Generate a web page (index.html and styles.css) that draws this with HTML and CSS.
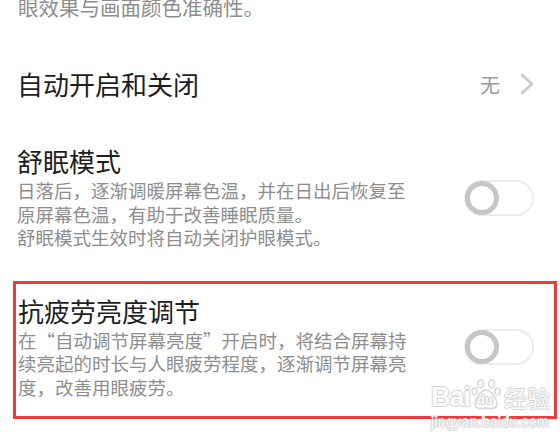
FILE: index.html
```html
<!DOCTYPE html>
<html lang="zh-CN">
<head>
<meta charset="utf-8">
<link rel="stylesheet" href="styles.css">
</head>
<body>
<div class="page">
  <p class="desc prev">眼效果与画面颜色准确性。</p>

  <div class="row nav-row">
    <span class="title">自动开启和关闭</span>
    <span class="value">无</span>
    <svg class="chev" width="16" height="22" viewBox="0 0 16 22"><path d="M2 2 L12 11 L2 20" fill="none" stroke="#c9c9c9" stroke-width="2.6" stroke-linecap="round" stroke-linejoin="round"/></svg>
  </div>

  <div class="row setting sleep">
    <div class="text">
      <div class="title">舒眠模式</div>
      <p class="desc">日落后，逐渐调暖屏幕色温，并在日出后恢复至<br>原屏幕色温，有助于改善睡眠质量。<br>舒眠模式生效时将自动关闭护眼模式。</p>
    </div>
    <svg class="toggle" width="70" height="36" viewBox="0 0 70 36"><rect x="1" y="1" width="68" height="34" rx="17" fill="#fff" stroke="#ececec" stroke-width="2"/><circle cx="18" cy="18" r="14.5" fill="#fff" stroke="#c6c6c6" stroke-width="5"/></svg>
  </div>

  <div class="highlight">
    <div class="row setting">
      <div class="text">
        <div class="title">抗疲劳亮度调节</div>
        <p class="desc">在“自动调节屏幕亮度”开启时，将结合屏幕持<br>续亮起的时长与人眼疲劳程度，逐渐调节屏幕亮<br>度，改善用眼疲劳。</p>
      </div>
      <svg class="toggle" width="70" height="36" viewBox="0 0 70 36"><rect x="1" y="1" width="68" height="34" rx="17" fill="#fff" stroke="#ececec" stroke-width="2"/><circle cx="18" cy="18" r="14.5" fill="#fff" stroke="#c6c6c6" stroke-width="5"/></svg>
    </div>
  </div>

  <div class="watermark">
    <div class="wm-top">
      <span class="wm-bai">Bai</span>
      <span class="wm-paw">
        <svg width="30" height="32" viewBox="0 0 30 32"><g fill="#fbfbfb" stroke="#d6d6d6" stroke-width="1.4"><ellipse cx="9.5" cy="5" rx="3" ry="4"/><ellipse cx="20.5" cy="5" rx="3" ry="4"/><ellipse cx="3.5" cy="12.5" rx="2.6" ry="3.4"/><ellipse cx="26.5" cy="12.5" rx="2.6" ry="3.4"/><path d="M15 11 C10 11 4 20 4 25 C4 30 10 30 15 29 C20 30 26 30 26 25 C26 20 20 11 15 11 Z"/></g></svg>
        <span class="wm-du">du</span>
      </span>
      <span class="wm-jy">经验</span>
    </div>
    <div class="wm-url">jingyan.baidu.com</div>
  </div>
</div>
</body>
</html>
```

FILE: styles.css
```css
html, body {
  margin: 0;
  padding: 0;
  background: #ffffff;
}

body {
  font-family: "Noto Sans CJK SC", "Noto Sans", sans-serif;
  width: 560px;
  height: 441px;
  overflow: hidden;
}

.page {
  position: relative;
  width: 560px;
  height: 441px;
}

.desc {
  margin: 0;
  font-size: 18.5px;
  line-height: 23.5px;
  color: #8e8e8e;
}

.prev {
  padding: 0 18px;
  margin-top: -5px;
  font-size: 20.5px;
  line-height: 24px;
}

.row {
  display: flex;
  align-items: center;
}

.title {
  font-size: 26px;
  line-height: 34px;
  color: #1e1e1e;
}

.nav-row {
  height: 54px;
  margin-top: 38px;
  padding: 0 24px 0 17px;
}

.nav-row .title {
  flex: 1;
}

.value {
  font-size: 20px;
  color: #9a9a9a;
  margin-right: 20px;
}

.chev {
  display: block;
}

.setting {
  padding: 0 26px 0 17px;
  justify-content: space-between;
}

.sleep {
  margin-top: 33px;
}

.setting .title {
  margin-bottom: 1px;
}

.toggle {
  display: block;
  flex: none;
  margin-top: 2px;
}

.highlight {
  margin: 31px 0 0 13px;
  width: 544px;
  box-sizing: border-box;
  border: 3px solid #f2393b;
  padding: 10px 0 17px;
}

.highlight .setting {
  padding: 0 20px 0 2px;
}

.watermark {
  position: absolute;
  left: 431px;
  top: 382px;
  color: #fbfbfb;
  font-family: "Liberation Sans", "Noto Sans CJK SC", sans-serif;
  text-shadow: 1px 0 #d4d4d4, -1px 0 #d4d4d4, 0 1px #d4d4d4, 0 -1px #d4d4d4;
}

.wm-top {
  display: flex;
  align-items: flex-end;
  height: 34px;
}

.wm-bai {
  font-size: 27px;
  line-height: 28px;
  font-weight: bold;
  letter-spacing: -1px;
}

.wm-paw {
  position: relative;
  width: 30px;
  height: 32px;
  margin-left: 1px;
}

.wm-paw svg {
  display: block;
}

.wm-du {
  position: absolute;
  left: 6px;
  top: 14px;
  font-size: 13px;
  font-weight: bold;
  line-height: 14px;
}

.wm-jy {
  font-family: "Noto Sans CJK SC", sans-serif;
  font-size: 23px;
  line-height: 28px;
  margin-left: 3px;
}

.wm-url {
  font-size: 14px;
  line-height: 16px;
  margin-top: 3px;
  letter-spacing: 0.3px;
}
```
